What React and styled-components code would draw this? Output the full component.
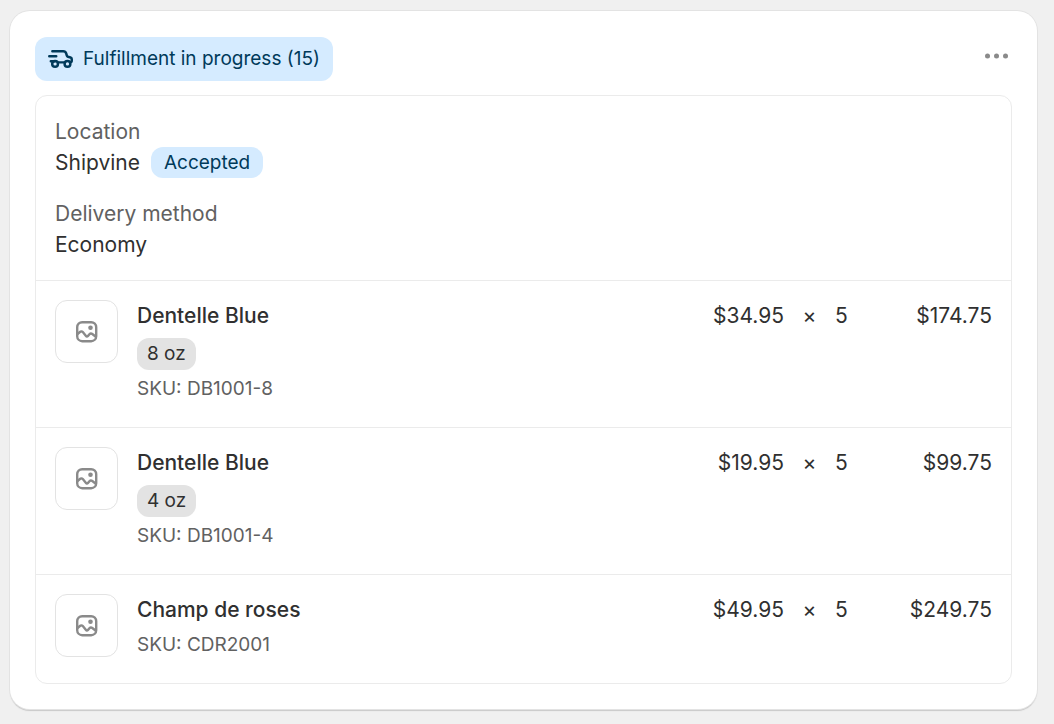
import React from "react"
import styled, { createGlobalStyle } from "styled-components"

const items = [
  { id: 1, title: "Dentelle Blue", variant: "8 oz", sku: "DB1001-8", price: "$34.95", quantity: 5, total: "$174.75" },
  { id: 2, title: "Dentelle Blue", variant: "4 oz", sku: "DB1001-4", price: "$19.95", quantity: 5, total: "$99.75" },
  { id: 3, title: "Champ de roses", sku: "CDR2001", price: "$49.95", quantity: 5, total: "$249.75" }
]

const TruckIcon = () => (
  <svg width="31" height="31" viewBox="0 0 20 20" fill="none" stroke="currentColor" strokeWidth="1.6" strokeLinecap="round" strokeLinejoin="round" aria-hidden="true">
    <path d="M4.750 5.250h6.991a2 2 0 0 1 1.923 1.451l.427 1.494a1 1 0 0 0 .719.695l1.682.420a1 1 0 0 1 .758.971v1.219a1 1 0 0 1-1 1" />
    <path d="M2.750 8.500h4.500M3.750 11.750h2.500M8.700 12.500h3.600" />
    <circle cx="6.500" cy="13.500" r="1.850" />
    <circle cx="14.500" cy="13.500" r="1.850" />
  </svg>
)

const ImageIcon = () => (
  <svg width="22" height="22" viewBox="0 0 22 22" fill="none" stroke="currentColor" strokeWidth="2.4" strokeLinecap="round" strokeLinejoin="round" aria-hidden="true">
    <rect x="1.200" y="1.200" width="19" height="19" rx="5" />
    <path d="M1.500 13.200l2.400-2.200c.9-.8 2.100-.8 2.900.1l3.200 3.900c.5.600 1.300.6 1.800.1l1.700-1.900c.8-.8 1.900-.9 2.800-.2l3.200 2.500" />
    <circle cx="14.500" cy="6.800" r="2.300" fill="currentColor" stroke="none" />
  </svg>
)

const DotsIcon = () => (
  <svg width="24" height="6" viewBox="0 0 24 6" fill="currentColor" aria-hidden="true">
    <circle cx="3.500" cy="3" r="2.500" />
    <circle cx="12.500" cy="3" r="2.500" />
    <circle cx="21.500" cy="3" r="2.500" />
  </svg>
)

const App = () => (
  <Page>
    <GlobalStyle />
    <Card>
      <CardHeader>
        <StatusBadge>
          <TruckIcon />
          Fulfillment in progress (15)
        </StatusBadge>
        <MenuButton type="button" aria-label="More actions">
          <DotsIcon />
        </MenuButton>
      </CardHeader>
      <Panel>
        <Details>
          <div>
            <Label>Location</Label>
            <Value>
              Shipvine <Accepted>Accepted</Accepted>
            </Value>
          </div>
          <div>
            <Label>Delivery method</Label>
            <Value>Economy</Value>
          </div>
        </Details>
        <ItemList>
          {items.map(item => (
            <Item key={item.id}>
              <Thumbnail>
                <ImageIcon />
              </Thumbnail>
              <Product>
                <Title>{item.title}</Title>
                {item.variant && <Variant>{item.variant}</Variant>}
                <Sku>SKU: {item.sku}</Sku>
              </Product>
              <Price>{item.price}</Price>
              <Times>×</Times>
              <Quantity>{item.quantity}</Quantity>
              <Price>{item.total}</Price>
            </Item>
          ))}
        </ItemList>
      </Panel>
    </Card>
  </Page>
)

const GlobalStyle = createGlobalStyle`
  *, *::before, *::after {
    box-sizing: border-box;
  }

  body {
    margin: 0;
    background: #f0f0f0;
    color: #303030;
    font-family: Inter, sans-serif;
    font-size: 21px;
    line-height: 31px;
  }
`

const Page = styled.main`
  padding: 11px 17px 15px 10px;
`

const Card = styled.section`
  padding: 26px 25px 25px;
  border-radius: 20px;
  background: #fff;
  box-shadow: 0 0 0 1px #e3e3e3, 0 2px 1px #c8c8c8;
`

const CardHeader = styled.header`
  display: flex;
  align-items: flex-start;
  justify-content: space-between;
  margin-bottom: 14px;
`

const StatusBadge = styled.div`
  display: flex;
  align-items: center;
  gap: 7px;
  height: 44px;
  padding: 0 13px 2px 10px;
  border-radius: 12px;
  background: #d5ebff;
  color: #003a5a;
  font-size: 19px;
`

const MenuButton = styled.button`
  display: flex;
  align-items: center;
  justify-content: center;
  width: 32px;
  height: 38px;
  padding: 0;
  border: 0;
  background: none;
  color: #8a8a8a;
  cursor: pointer;
`

const Panel = styled.div`
  border: 1px solid #ebebeb;
  border-radius: 12px;
`

const Details = styled.div`
  display: flex;
  flex-direction: column;
  gap: 20px;
  padding: 20px 19px;
`

const Label = styled.div`
  color: #616161;
`

const Value = styled.div`
  display: flex;
  align-items: center;
  gap: 11px;
`

const Accepted = styled.span`
  padding: 0 13px;
  border-radius: 12px;
  background: #d5ebff;
  color: #003a5a;
  font-size: 19px;
`

const ItemList = styled.ul`
  margin: 0;
  padding: 0;
  list-style: none;
`

const Item = styled.li`
  display: grid;
  grid-template-columns: 63px 1fr auto 51px 11px 146px;
  align-items: start;
  padding: 19px 19px 25px;
  border-top: 1px solid #ebebeb;
  line-height: 32px;
`

const Thumbnail = styled.div`
  display: flex;
  align-items: center;
  justify-content: center;
  height: 63px;
  border: 1px solid #e3e3e3;
  border-radius: 12px;
  color: #8a8a8a;
`

const Product = styled.div`
  display: flex;
  flex-direction: column;
  align-items: flex-start;
  gap: 6px;
  padding-left: 19px;
`

const Title = styled.div`
  font-weight: 500;
`

const Variant = styled.span`
  padding: 0 10px;
  border-radius: 12px;
  background: #e3e3e3;
  font-size: 19px;
`

const Sku = styled.div`
  color: #616161;
  font-size: 19px;
  line-height: 26px;
`

const Price = styled.div`
  text-align: right;
`

const Times = styled.div`
  text-align: center;
`

const Quantity = styled.div`
  text-align: center;
`

export default App
